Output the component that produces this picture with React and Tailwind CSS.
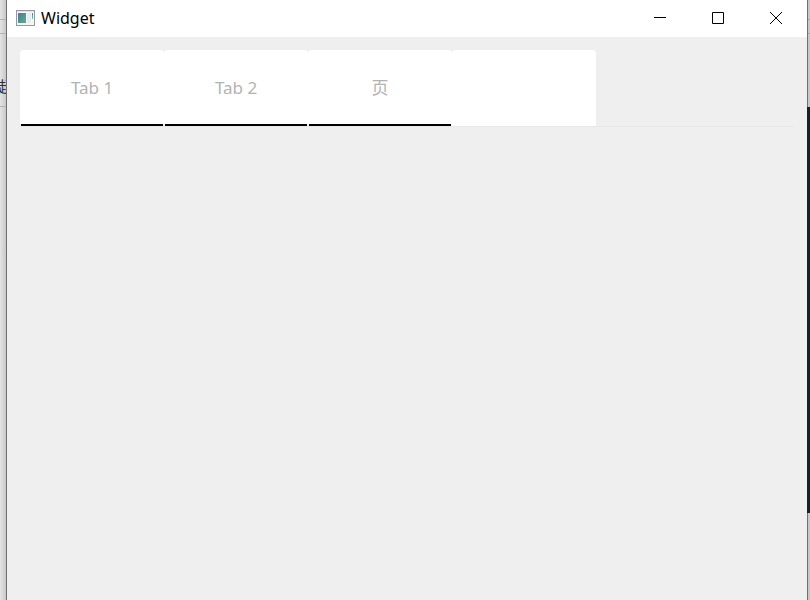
const tabs = ['Tab 1', 'Tab 2', '页', '']

function AppIcon() {
  return (
    <svg width="19" height="16" viewBox="0 0 19 16" className="shrink-0" aria-hidden="true">
      <defs>
        <linearGradient id="pane" x1="0" y1="0" x2="1" y2="1">
          <stop offset="0" stopColor="#4a7a9c" />
          <stop offset="1" stopColor="#5fae84" />
        </linearGradient>
        <linearGradient id="bar" x1="0" y1="0" x2="0" y2="1">
          <stop offset="0" stopColor="#4a7f9c" />
          <stop offset="1" stopColor="#7fc09a" />
        </linearGradient>
      </defs>
      <rect x="0.5" y="0.5" width="18" height="15" fill="#f5f6f8" stroke="#9599a1" />
      <rect x="1" y="1" width="17" height="1" fill="#dfe2e8" />
      <rect x="2" y="3" width="8" height="10" fill="url(#pane)" />
      <rect x="11" y="3" width="4" height="10" fill="#e8ecee" />
      <rect x="16" y="3" width="1" height="6" fill="url(#bar)" />
    </svg>
  )
}

function WindowButton({ label, children }) {
  return (
    <button type="button" aria-label={label} className="flex h-full w-[58px] items-center justify-center hover:bg-gray-200">
      <svg width="12" height="12" viewBox="0 0 12 12" fill="none" stroke="#000" aria-hidden="true">
        {children}
      </svg>
    </button>
  )
}

function TitleBar() {
  return (
    <header className="flex h-[37px] items-center bg-white pb-px pl-[9px] pr-0.5">
      <AppIcon />
      <h1 className="ml-1.5 flex-1 text-base text-black">Widget</h1>
      <div className="flex h-full">
        <WindowButton label="Minimize">
          <path d="M0 5.5h12" />
        </WindowButton>
        <WindowButton label="Maximize">
          <path d="M0.5 0.5h11v11h-11z" />
        </WindowButton>
        <WindowButton label="Close">
          <path d="M0 0l12 12M12 0L0 12" />
        </WindowButton>
      </div>
    </header>
  )
}

function Tab({ label }) {
  return (
    <button
      type="button"
      role="tab"
      aria-label={label || 'Empty tab'}
      className="flex h-[76px] w-36 flex-col rounded-t bg-white text-[17px] text-[#b3b3b3]"
    >
      <span className="flex w-full flex-1 items-center justify-center pt-0.5">{label}</span>
      {label && <span className="h-0.5 w-full border-x border-[#efefef] bg-black" />}
    </button>
  )
}

export default function App() {
  return (
    <div className="flex min-h-screen bg-[#cfcfcf] font-['Noto_Sans','Noto_Sans_CJK_SC',sans-serif]">
      {/* page behind the window, left side */}
      <div className="w-1.5 overflow-hidden bg-linear-to-r from-[#e4e4e4] to-[#c8c8c8]">
        <div className="mt-[19px] h-[15px] border-y border-[#b4b4b4]" />
        <div className="mt-[41px] h-8 border-b border-[#b4b4b4]">
          <p className="-ml-0.5 text-base text-[#333]">超</p>
        </div>
      </div>

      <div className="min-w-0 flex-1 border-x border-[#707070] bg-[#efefef]">
        <TitleBar />
        <main className="px-[13px] pt-[13px]">
          <div role="tablist" className="flex border-b border-[#e8e8e8]">
            {tabs.map((label, i) => (
              <Tab key={i} label={label} />
            ))}
          </div>
        </main>
      </div>

      {/* page behind the window, right side */}
      <div className="w-0.5 bg-[#c8c8c8] pt-[19px]">
        <div className="h-[15px] border-y border-[#a8a8a8]" />
        <div className="-ml-px mt-[73px] h-[406px] bg-[#1e1f26]" />
      </div>
    </div>
  )
}
